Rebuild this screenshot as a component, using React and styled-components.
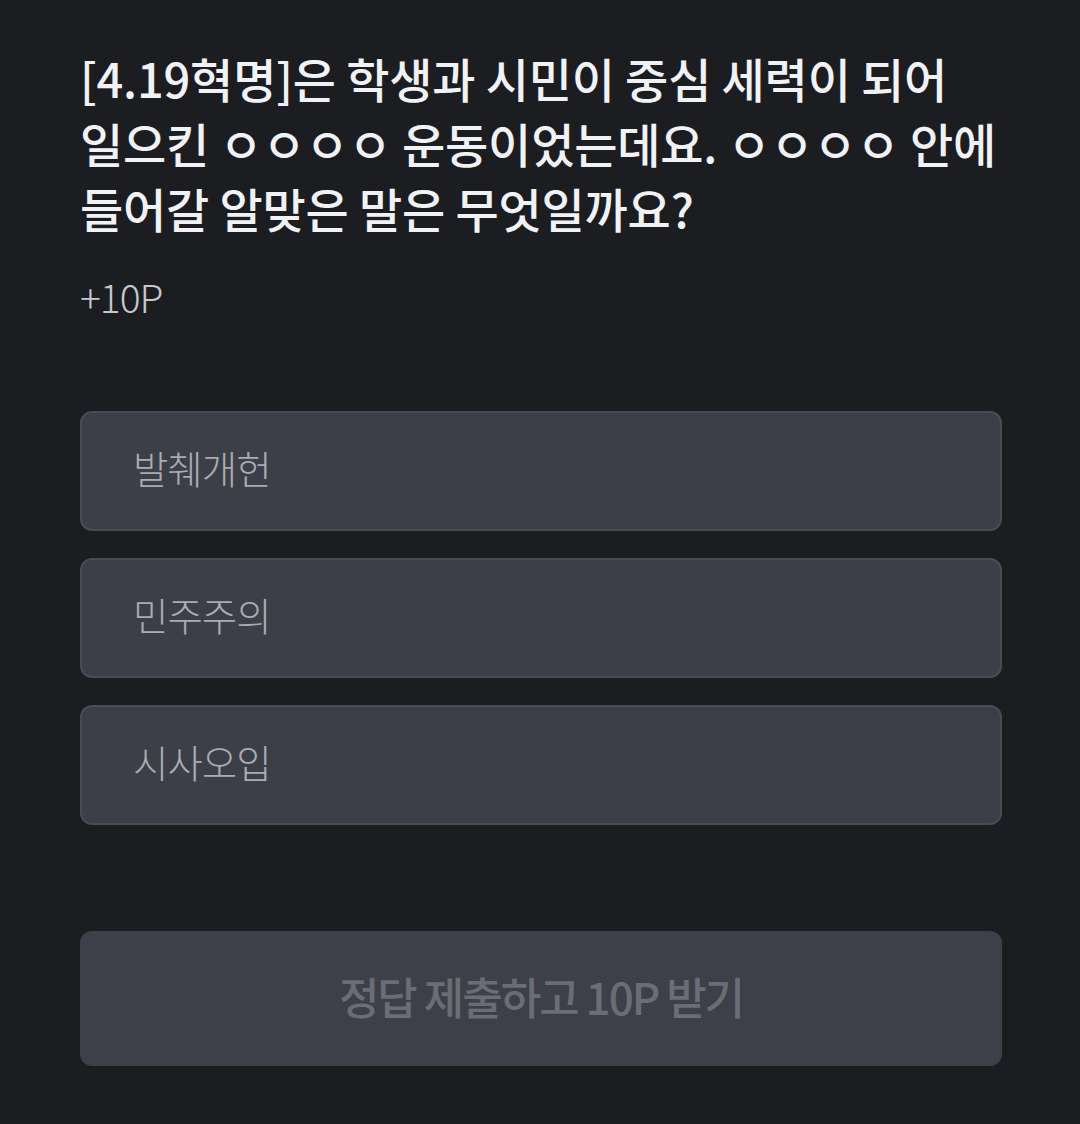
import React from "react";
import styled, { createGlobalStyle } from "styled-components";

const Global = createGlobalStyle`
  html, body { margin: 0; padding: 0; background: #1c1d21; }
  body { font-family: "Noto Sans CJK KR", "Noto Sans", sans-serif; }
`;

const Page = styled.div`
  min-height: 1124px;
  box-sizing: border-box;
  background: #1c1d21;
  padding: 45px 78px 0 80px;
  display: flex;
  flex-direction: column;
`;

const Title = styled.h1`
  margin: 0;
  font-size: 47px;
  line-height: 65px;
  font-weight: 500;
  letter-spacing: -0.2px;
  color: #f0f2f5;
  white-space: nowrap;
`;

const Reward = styled.div`
  margin-top: 32px;
  font-size: 39px;
  line-height: 48px;
  font-weight: 300;
  letter-spacing: -1px;
  color: #c5c8cd;
`;

const Options = styled.div`
  margin-top: 91px;
  display: flex;
  flex-direction: column;
  gap: 27px;
`;

const Option = styled.button`
  height: 120px;
  box-sizing: border-box;
  border: 2px solid #494c54;
  border-radius: 12px;
  background: #3c3f47;
  padding: 0 0 8px 51px;
  text-align: left;
  font-family: inherit;
  font-size: 38.5px;
  font-weight: 300;
  letter-spacing: -1px;
  color: #a9acb2;
`;

const Submit = styled.button`
  margin-top: 106px;
  height: 135px;
  border: none;
  border-radius: 12px;
  background: #3d4048;
  padding: 0 0 6px;
  font-family: inherit;
  font-size: 44px;
  font-weight: 500;
  letter-spacing: -2px;
  color: #6a6d75;
`;

const options = ["발췌개헌", "민주주의", "시사오입"];

export default function App() {
  return (
    <>
      <Global />
      <Page>
        <Title>
          [4.19혁명]은 학생과 시민이 중심 세력이 되어
          <br />
          일으킨 ㅇㅇㅇㅇ 운동이었는데요. ㅇㅇㅇㅇ 안에
          <br />
          들어갈 알맞은 말은 무엇일까요?
        </Title>
        <Reward>+10P</Reward>
        <Options>
          {options.map((o) => (
            <Option key={o}>{o}</Option>
          ))}
        </Options>
        <Submit>정답 제출하고 10P 받기</Submit>
      </Page>
    </>
  );
}
